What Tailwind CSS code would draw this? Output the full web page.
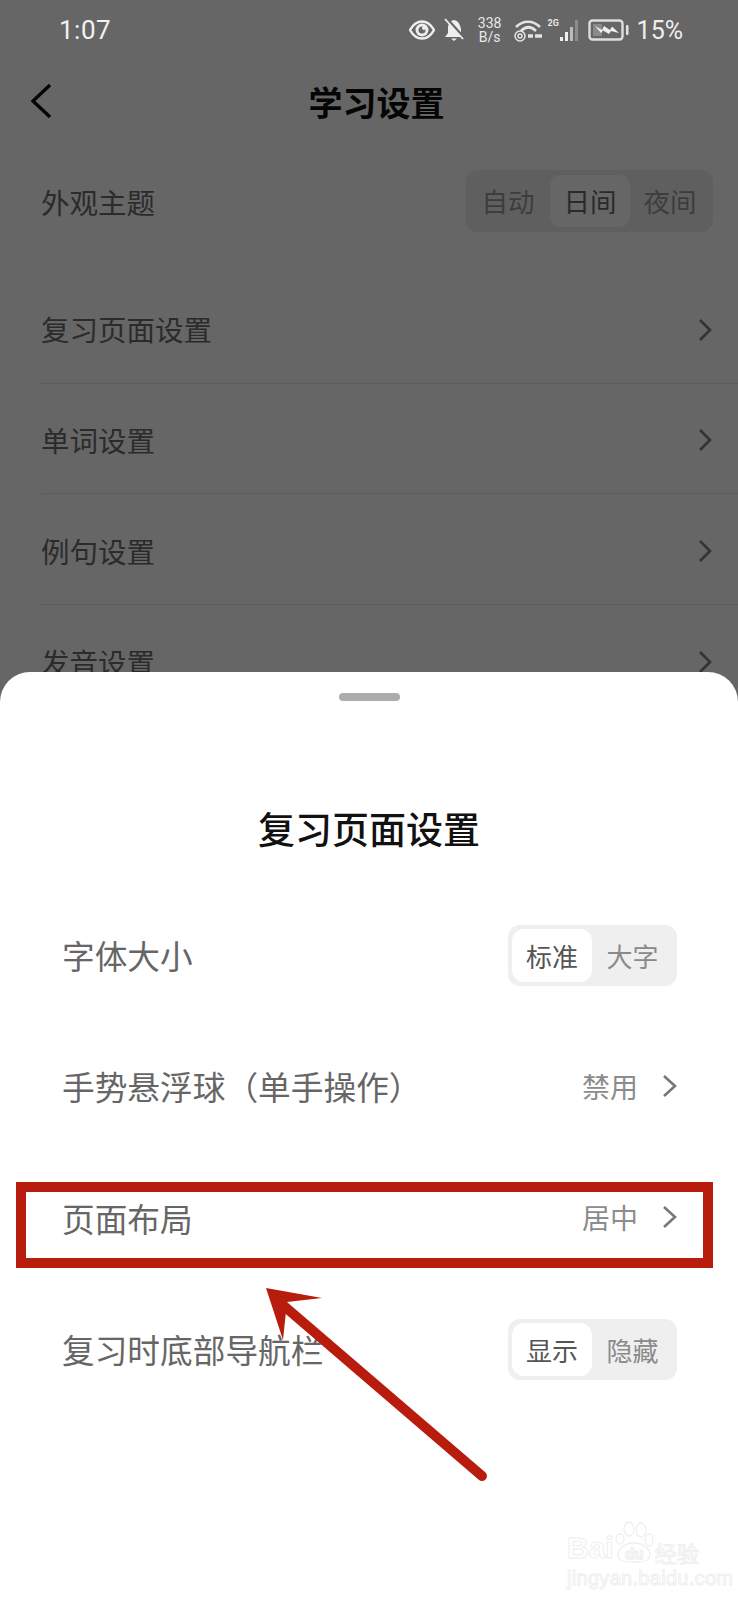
<!doctype html>
<html lang="zh"><head><meta charset="utf-8"><script src="https://cdn.jsdelivr.net/npm/@tailwindcss/browser@4"></script></head>
<body class="m-0">
<div class="relative w-[738px] h-[1600px] overflow-hidden bg-[#666666] font-['Noto_Sans_CJK_SC','Noto_Sans',sans-serif]">
  <!-- status bar -->
  <div class="h-[60px] pl-[59px] pr-[55px] flex items-center justify-between text-[#f2f2f2]">
    <span class="font-['Roboto'] text-[26px] leading-none tracking-[0.5px]">1:07</span>
    <div class="flex items-center">
      <svg width="26" height="20" viewBox="0 0 26 20" class="mr-[8px]"><path d="M1 10C5 3 9 1.500 13 1.500S21 3 25 10C21 17 17 18.500 13 18.500S5 17 1 10Z" fill="#666" stroke="#eee" stroke-width="2.400"/><circle cx="13" cy="10" r="6.500" fill="#eee"/><circle cx="13" cy="10" r="3.500" fill="#666"/><circle cx="15" cy="8" r="2" fill="#eee"/></svg>
      <svg width="22" height="24" viewBox="0 0 22 24" class="mr-[11px]"><path d="M11 2C6 3 5 7 5 11V15L2 19H20L18 15V11C17 7 16 3 11 2Z" fill="#eee"/><path d="M8 20.500H14L11 23Z" fill="#eee"/><path d="M3 0L21 20" stroke="#666" stroke-width="3"/><path d="M2 1L20 21" stroke="#eee" stroke-width="1.800"/></svg>
      <div class="w-[28px] mr-[9px] text-[14px] leading-[14px] text-center font-['Roboto'] text-[#e8e8e8]"><div>338</div><div>B/s</div></div>
      <svg width="30" height="24" viewBox="0 0 30 24" class="mr-[5px]" fill="none" stroke="#e4e4e4"><path d="M3 9C10 2 20 2 27 9" stroke-width="2.600"/><path d="M8 13C13 8 18 8 23 13" stroke-width="2.600"/><circle cx="7" cy="18" r="5" stroke-width="1.500"/><circle cx="7" cy="18" r="2" stroke-width="1.500"/><path d="M15 18H20M22 18H29" stroke-width="3.500"/></svg>
      <div class="relative w-[31px] h-[24px] mr-[9px]">
        <span class="absolute left-0 top-0 text-[9px] leading-[10px] font-bold font-['Roboto'] text-[#e8e8e8]">2G</span>
        <svg width="31" height="24" viewBox="0 0 31 24" class="absolute inset-0"><rect x="12" y="19" width="3" height="4" fill="#eee"/><rect x="17" y="14" width="3" height="9" fill="#eee"/><rect x="22" y="9" width="3" height="14" fill="#bbb"/><rect x="27" y="2" width="3" height="21" fill="#8c8c8c"/></svg>
      </div>
      <svg width="42" height="24" viewBox="0 0 42 24" class="mr-[7px]"><rect x="1.500" y="2.500" width="33" height="19" rx="3" fill="none" stroke="#dedede" stroke-width="2.400"/><rect x="5" y="6" width="9" height="12" fill="#8a8a8a"/><path d="M7 8L14 12L16 8L22 12L24 8.500L31 15L23 13L21 16L15 12.500L13 15Z" fill="#eee"/><rect x="38" y="7" width="2.500" height="10" rx="1" fill="#e4e4e4"/></svg>
      <span class="font-['Roboto'] text-[25px] leading-none text-[#eeeeee]">15%</span>
    </div>
  </div>
  <!-- nav -->
  <div class="relative h-[84px] flex items-center justify-center">
    <svg width="24" height="36" viewBox="0 0 24 36" class="absolute left-[29px] top-[23px]" fill="none" stroke="#050505" stroke-width="3.400"><path d="M21 2L4 18L21 34"/></svg>
    <span class="ml-[15px] text-[34px] leading-none font-bold text-[#050505]">学习设置</span>
  </div>
  <!-- theme -->
  <div class="mt-[7px] h-[100px] pl-[41px] pr-[25px] flex items-center justify-between">
    <span class="mt-[2px] text-[28.500px] text-[#2b2b2b]">外观主题</span>
    <div class="w-[247px] h-[62px] rounded-[12px] bg-[#5f5f5f] flex items-center text-[26.500px] text-[#3d3d3d]">
      <span class="w-[84px] text-center">自动</span>
      <span class="w-[80px] h-[52px] flex items-center justify-center rounded-[10px] bg-[#666666] text-[#2a2a2a]">日间</span>
      <span class="w-[80px] text-center">夜间</span>
    </div>
  </div>
  <!-- list -->
  <div class="pt-[22px] pl-[41px]">
    <div class="h-[110.600px] pt-[4px] pr-[26px] flex items-center justify-between border-b border-[#5c5c5c] text-[28.500px] text-[#2b2b2b]"><span>复习页面设置</span>
      <svg width="14" height="24" viewBox="0 0 14 24" fill="none" stroke="#333" stroke-width="2.600"><path d="M2 2L12 12L2 22"/></svg></div>
    <div class="h-[110.600px] pt-[4px] pr-[26px] flex items-center justify-between border-b border-[#5c5c5c] text-[28.500px] text-[#2b2b2b]"><span>单词设置</span>
      <svg width="14" height="24" viewBox="0 0 14 24" fill="none" stroke="#333" stroke-width="2.600"><path d="M2 2L12 12L2 22"/></svg></div>
    <div class="h-[110.600px] pt-[4px] pr-[26px] flex items-center justify-between border-b border-[#5c5c5c] text-[28.500px] text-[#2b2b2b]"><span>例句设置</span>
      <svg width="14" height="24" viewBox="0 0 14 24" fill="none" stroke="#333" stroke-width="2.600"><path d="M2 2L12 12L2 22"/></svg></div>
    <div class="h-[110.600px] pt-[4px] pr-[26px] flex items-center justify-between text-[28.500px] text-[#2b2b2b]"><span>发音设置</span>
      <svg width="14" height="24" viewBox="0 0 14 24" fill="none" stroke="#333" stroke-width="2.600"><path d="M2 2L12 12L2 22"/></svg></div>
  </div>

  <!-- bottom sheet -->
  <div class="absolute left-0 right-0 bottom-0 h-[928px] bg-white rounded-t-[30px]">
    <div class="pt-[21px] flex justify-center"><div class="w-[61px] h-[8px] rounded-full bg-[#acacac]"></div></div>
    <div class="mt-[102px] text-center text-[37px] leading-[50px] font-medium text-[#111111]">复习页面设置</div>
    <div class="mt-[36px] pl-[62px] pr-[61px] text-[32.700px] text-[#666666]">
      <div class="h-[131.300px] flex items-center justify-between">
        <span>字体大小</span>
        <div class="mt-[2px] w-[169px] h-[61px] p-[4px] rounded-[12px] bg-[#efefef] flex items-center text-[26px]">
          <span class="w-[80px] h-[53px] rounded-[12px] bg-white flex items-center justify-center text-[#555555]">标准</span>
          <span class="flex-1 text-center text-[#8a8a8a]">大字</span>
        </div>
      </div>
      <div class="h-[131.300px] flex items-center justify-between">
        <span>手势悬浮球（单手操作）</span>
        <div class="flex items-center text-[28px] text-[#8c8c8c]"><span>禁用</span>
          <svg width="15" height="24" viewBox="0 0 15 24" class="ml-[24px]" fill="none" stroke="#777" stroke-width="2.600"><path d="M2 2L13 12L2 22"/></svg></div>
      </div>
      <div class="h-[131.300px] flex items-center justify-between">
        <span>页面布局</span>
        <div class="flex items-center text-[28px] text-[#8c8c8c]"><span>居中</span>
          <svg width="15" height="24" viewBox="0 0 15 24" class="ml-[24px]" fill="none" stroke="#777" stroke-width="2.600"><path d="M2 2L13 12L2 22"/></svg></div>
      </div>
      <div class="h-[131.300px] flex items-center justify-between">
        <span>复习时底部导航栏</span>
        <div class="mt-[2px] w-[169px] h-[61px] p-[4px] rounded-[12px] bg-[#efefef] flex items-center text-[26px]">
          <span class="w-[80px] h-[53px] rounded-[12px] bg-white flex items-center justify-center text-[#555555]">显示</span>
          <span class="flex-1 text-center text-[#8a8a8a]">隐藏</span>
        </div>
      </div>
    </div>
  </div>

  <!-- annotation: red box -->
  <div class="absolute left-[16px] top-[1182px] w-[697px] h-[86px] border-[10px] border-[#b71c0c]"></div>
  <!-- annotation: arrow -->
  <svg width="738" height="1600" viewBox="0 0 738 1600" class="absolute inset-0 pointer-events-none"><path d="M482 1476L284 1306" fill="none" stroke="#b71c0c" stroke-width="10" stroke-linecap="round"/><path d="M266 1288L322 1298L287 1302L283 1340Z" fill="#b71c0c"/></svg>

  <!-- watermark -->
  <div class="absolute left-[567px] top-[1520px] w-[146px] h-[68px] text-transparent [-webkit-text-stroke:1px_#efefef]">
    <div class="flex items-end h-[43px] font-['Liberation_Sans'] leading-none">
      <span class="text-[30px] font-bold">Bai</span>
      <svg width="40" height="42" viewBox="0 0 40 42" fill="none" stroke="#efefef" stroke-width="1.300"><ellipse cx="6" cy="18" rx="4" ry="5"/><ellipse cx="15" cy="8" rx="5" ry="7"/><ellipse cx="27" cy="9" rx="5" ry="7"/><ellipse cx="35" cy="19" rx="4" ry="6"/><path d="M4 34C4 27 12 22 20 22S36 27 36 34C36 40 30 41 20 41S4 40 4 34Z"/><text x="11" y="38" font-size="15" font-family="Liberation Sans" font-weight="700">du</text></svg>
      <span class="text-[22px] ml-[1px] font-['Noto_Sans_CJK_SC']">经验</span>
    </div>
    <div class="mt-[4px] text-[20px] leading-[22px] font-['Liberation_Sans'] tracking-[0.3px] whitespace-nowrap">jingyan.baidu.com</div>
  </div>
</div>
</body></html>
